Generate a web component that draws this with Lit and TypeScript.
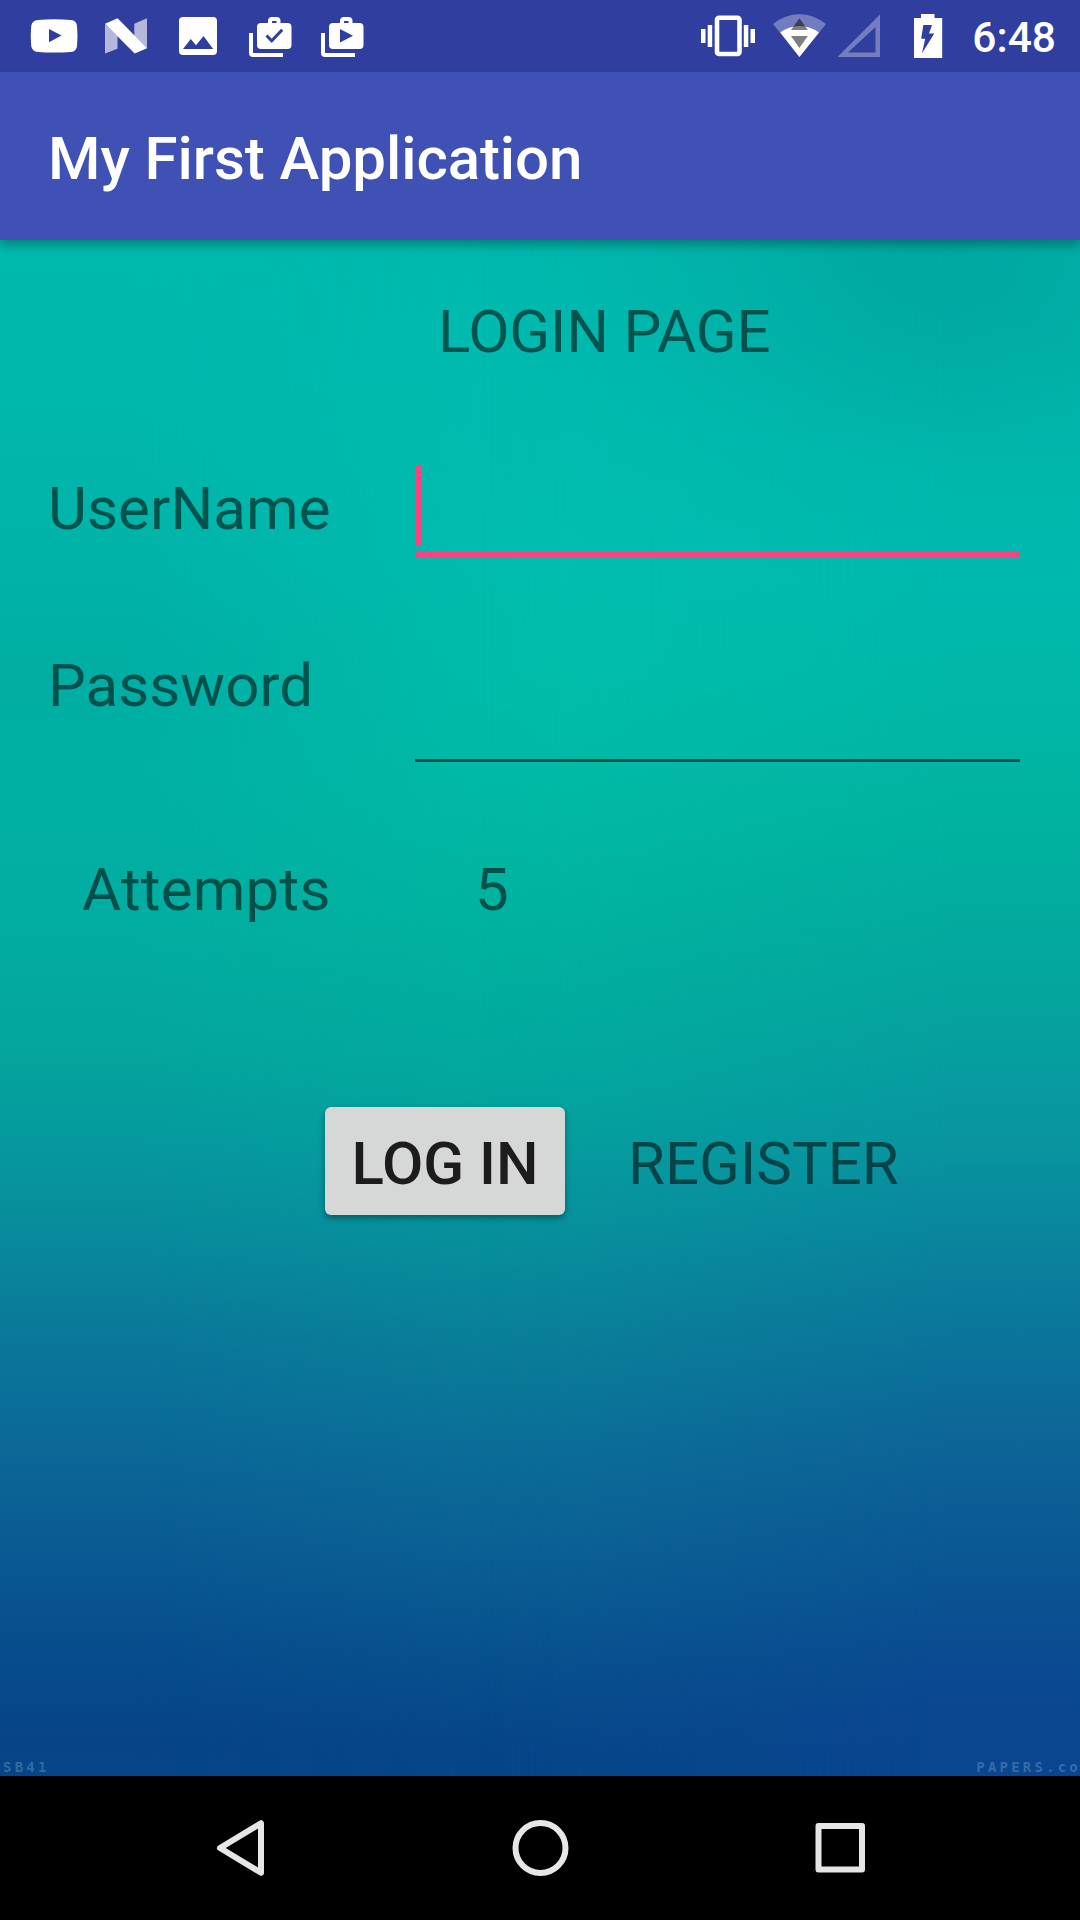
import { LitElement, html, css, svg } from "lit";
import { customElement, property } from "lit/decorators.js";

@customElement("status-bar")
class StatusBar extends LitElement {
  @property() time = "6:48";

  static styles = css`
    :host {
      display: flex;
      box-sizing: border-box;
      height: 72px;
      padding: 0 24px 0 18px;
      background: #303e9f;
      justify-content: space-between;
      font-family: Roboto, sans-serif;
    }
    .group {
      display: flex;
    }
    svg {
      display: block;
      height: 72px;
      fill: #fff;
    }
    .clock {
      margin-left: 10px;
      font-size: 42.5px;
      font-weight: 500;
      line-height: 76px;
      color: #fff;
      white-space: nowrap;
    }
  `;

  private icon(x: number, width: number, body: unknown) {
    return html`<svg viewBox="${x} 0 ${width} 72" width=${width} height="72">${body}</svg>`;
  }

  private bag(x: number, mark: unknown) {
    return this.icon(
      x,
      72,
      svg`
        <g transform="translate(${x - 234} 0)">
          <path d="M249 33h4v20h30v4H253q-4 0-4-4z"/>
          <path fill-rule="evenodd" d="M261 23h7v-2q0-4 4-4h4.500q4 0 4 4v2h7q4 0 4 4v18q0 4-4 4h-26.500q-4 0-4-4V27q0-4 4-4zM272 21v2h4.500v-2z"/>
          ${mark}
        </g>`
    );
  }

  render() {
    return html`
      <div class="group">
        ${this.icon(18, 72, svg`
          <path d="M38 20Q54 18.600 71 20Q76.500 20.500 77 26Q78 36 77 46Q76.500 51.500 71 52Q54 53 38 52Q32 51.500 31.200 46Q30.200 36 31.200 26Q32 20.500 38 20z"/>
          <path d="M49 29l12.500 6.600L49 42.300z" fill="#303e9f"/>`)}
        ${this.icon(90, 72, svg`
          <path d="M105 24l12.500 12v12.700L105 53.500zM134.300 23.700L147 18.300V48.500L134.300 36z" fill-opacity=".64"/>
          <path d="M105 23.700L117.600 18.300L147 48.300L134.700 53.600z"/>`)}
        ${this.icon(162, 72, svg`
          <rect x="179" y="17" width="38" height="38" rx="4"/>
          <path d="M183 49l7.800-10 5.200 6.200 7.500-9.200 9.700 13z" fill="#303e9f"/>`)}
        ${this.bag(234, svg`<path d="M266.500 35.500l5.200 5.300 10.500-11" fill="none" stroke="#303e9f" stroke-width="3"/>`)}
        ${this.bag(306, svg`<path d="M268 29l13 6.800-13 6.700z" fill="#303e9f"/>`)}
      </div>
      <div class="group">
        ${this.icon(692, 72, svg`
          <rect x="717" y="17.700" width="22.500" height="36.300" rx="2" fill="none" stroke="#fff" stroke-width="4.600"/>
          <path d="M707.700 25h4.500v22h-4.500zM701 29h4.500v14h-4.500zM743.800 25h4.500v22h-4.500zM750.500 29h4.500v14h-4.500z"/>`)}
        ${this.icon(764, 68, svg`
          <path d="M799.400 57L773 24Q785 14.200 799.400 14.200Q814 14.200 826 24z" fill-opacity=".32"/>
          <path d="M799.400 57L780.300 32.500Q789 26 799.400 26Q810 26 819 32.500z"/>
          <path d="M799.400 18.300l8.400 11.700h-16.800zM791 36h16.800l-8.400 12z" fill="#000" fill-opacity=".5"/>`)}
        ${this.icon(832, 58, svg`
          <path fill-rule="evenodd" fill-opacity=".33" d="M837.500 57L880 14.500V57zM848 52.500H875.500V27z"/>`)}
        ${this.icon(890, 72, svg`
          <path d="M914 18h7v-4h13.500v4h7.700v40H914z"/>
          <path d="M923.300 25h8.700l-3 8.600h5.300L922 53.300l3.200-14.500h-4z" fill="#303e9f"/>`)}
        <span class="clock">${this.time}</span>
      </div>
    `;
  }
}

@customElement("nav-bar")
class NavBar extends LitElement {
  static styles = css`
    :host {
      display: flex;
      height: 144px;
      background: #000;
      justify-content: center;
      gap: 165px;
      align-items: center;
    }
    svg {
      display: block;
      fill: none;
      stroke: #e6e6e6;
      stroke-width: 6;
      stroke-linejoin: round;
    }
  `;

  render() {
    return html`
      <svg viewBox="0 0 135 144" width="135" height="144"><path d="M47 72L88 47.200V96.800z"/></svg>
      <svg viewBox="0 0 135 144" width="135" height="144"><circle cx="67.500" cy="72" r="25"/></svg>
      <svg viewBox="0 0 135 144" width="135" height="144"><rect x="45.500" y="50" width="43.500" height="43.500"/></svg>
    `;
  }
}

@customElement("app-root")
class AppRoot extends LitElement {
  @property({ type: Number }) attempts = 5;

  static styles = css`
    :host {
      display: flex;
      flex-direction: column;
      width: 1080px;
      height: 1920px;
      overflow: hidden;
      font-family: Roboto, sans-serif;
      font-size: 60px;
      line-height: 70px;
      color: rgba(0, 0, 0, 0.54);
    }
    .toolbar {
      display: flex;
      align-items: center;
      box-sizing: border-box;
      height: 168px;
      padding: 6px 48px 0;
      flex: none;
      background: #3f51b5;
      color: #fff;
      font-weight: 500;
      letter-spacing: -0.07px;
      position: relative;
      z-index: 1;
      box-shadow: 0 5px 10px rgba(0, 0, 0, 0.3);
    }
    .content {
      position: relative;
      isolation: isolate;
      flex: 1;
      display: flex;
      flex-direction: column;
      box-sizing: border-box;
      padding: 57px 60px 0 48px;
      overflow: hidden;
      background: linear-gradient(
        #00b9ae 0,
        #00bbb0 100px,
        #00bfb1 300px,
        #00bfac 430px,
        #00bba6 560px,
        #00b39f 700px,
        #03a89f 850px,
        #07949d 980px,
        #0a7f9a 1110px,
        #0b6f98 1210px,
        #0b6295 1310px,
        #08538f 1410px,
        #064689 1510px,
        #064587 1536px
      );
    }
    .content::before,
    .content::after {
      content: "";
      position: absolute;
      inset: 0;
      z-index: -1;
    }
    .content::before {
      background: linear-gradient(
        #00baae 0,
        #00b8ac 150px,
        #00b3a8 320px,
        #00aea4 420px,
        #00b0a4 530px,
        #02ada1 680px,
        #04a59d 810px,
        #06989e 910px,
        #088a9c 1000px,
        #0a779a 1100px,
        #0b6997 1200px,
        #0a5b93 1300px,
        #074e8d 1400px,
        #064487 1500px,
        #064587 1536px
      );
      mask-image: linear-gradient(90deg, #000 0, #000 140px, transparent 560px);
    }
    .content::after {
      background:
        radial-gradient(ellipse 340px 200px at 880px 20px, rgba(0, 160, 155, 0.65), transparent),
        linear-gradient(
        #00b1a9 0,
        #00b2a9 100px,
        #00b7ac 240px,
        #00b9ae 340px,
        #00b7a8 450px,
        #00b3a0 570px,
        #03a99e 700px,
        #06a09f 800px,
        #0895a0 900px,
        #0a849e 1000px,
        #0b749a 1100px,
        #0d6597 1200px,
        #0b5994 1300px,
        #0a4d92 1400px,
        #0a4690 1480px,
        #0a4690 1536px
      );
      mask-image: linear-gradient(270deg, #000 0, #000 130px, transparent 600px);
    }
    .heading {
      padding-left: 390px;
      letter-spacing: -0.18px;
    }
    .row {
      display: grid;
      grid-template-columns: 367px 605px;
      align-items: start;
    }
    .row.user {
      margin-top: 98px;
    }
    .row.pass,
    .row.tries {
      margin-top: 92px;
    }
    .row.user .label {
      padding-top: 9px;
      letter-spacing: 0.1px;
    }
    .row.pass .label,
    .row.tries span {
      padding-top: 1px;
    }
    .row.tries .label {
      padding-left: 34px;
      letter-spacing: 0.25px;
    }
    .count {
      padding-left: 60px;
    }
    .field {
      box-sizing: border-box;
      height: 112px;
      border-bottom: 3px solid rgba(0, 0, 0, 0.54);
    }
    .field.focused {
      height: 93px;
      border-bottom: 6px solid #ff4081;
    }
    .caret {
      width: 6px;
      height: 81px;
      background: #ff4081;
    }
    .actions {
      display: flex;
      gap: 63px;
      align-items: center;
      margin-top: 182px;
      padding-left: 277px;
    }
    .login {
      width: 240px;
      height: 108px;
      padding: 6px 0 0;
      border: 0;
      border-radius: 6px;
      background: #d6d7d7;
      color: #1c1c1c;
      font: 500 60px/70px Roboto, sans-serif;
      box-shadow: 0 3px 6px rgba(0, 0, 0, 0.38);
    }
    .register {
      padding-top: 6px;
    }
    .marks {
      position: absolute;
      left: 3px;
      right: -1px;
      bottom: 1px;
      display: flex;
      justify-content: space-between;
      font: bold 14px/16px "DejaVu Sans Mono", monospace;
      letter-spacing: 3.2px;
      color: rgba(150, 190, 225, 0.33);
    }
  `;

  render() {
    return html`
      <status-bar></status-bar>
      <header class="toolbar">My First Application</header>
      <main class="content">
        <div class="heading">LOGIN PAGE</div>
        <div class="row user">
          <span class="label">UserName</span>
          <div class="field focused"><div class="caret"></div></div>
        </div>
        <div class="row pass">
          <span class="label">Password</span>
          <div class="field"></div>
        </div>
        <div class="row tries">
          <span class="label">Attempts</span>
          <span class="count">${this.attempts}</span>
        </div>
        <div class="actions">
          <button class="login">LOG IN</button>
          <span class="register">REGISTER</span>
        </div>
        <div class="marks"><span>SB41</span><span>PAPERS.co</span></div>
      </main>
      <nav-bar></nav-bar>
    `;
  }
}
